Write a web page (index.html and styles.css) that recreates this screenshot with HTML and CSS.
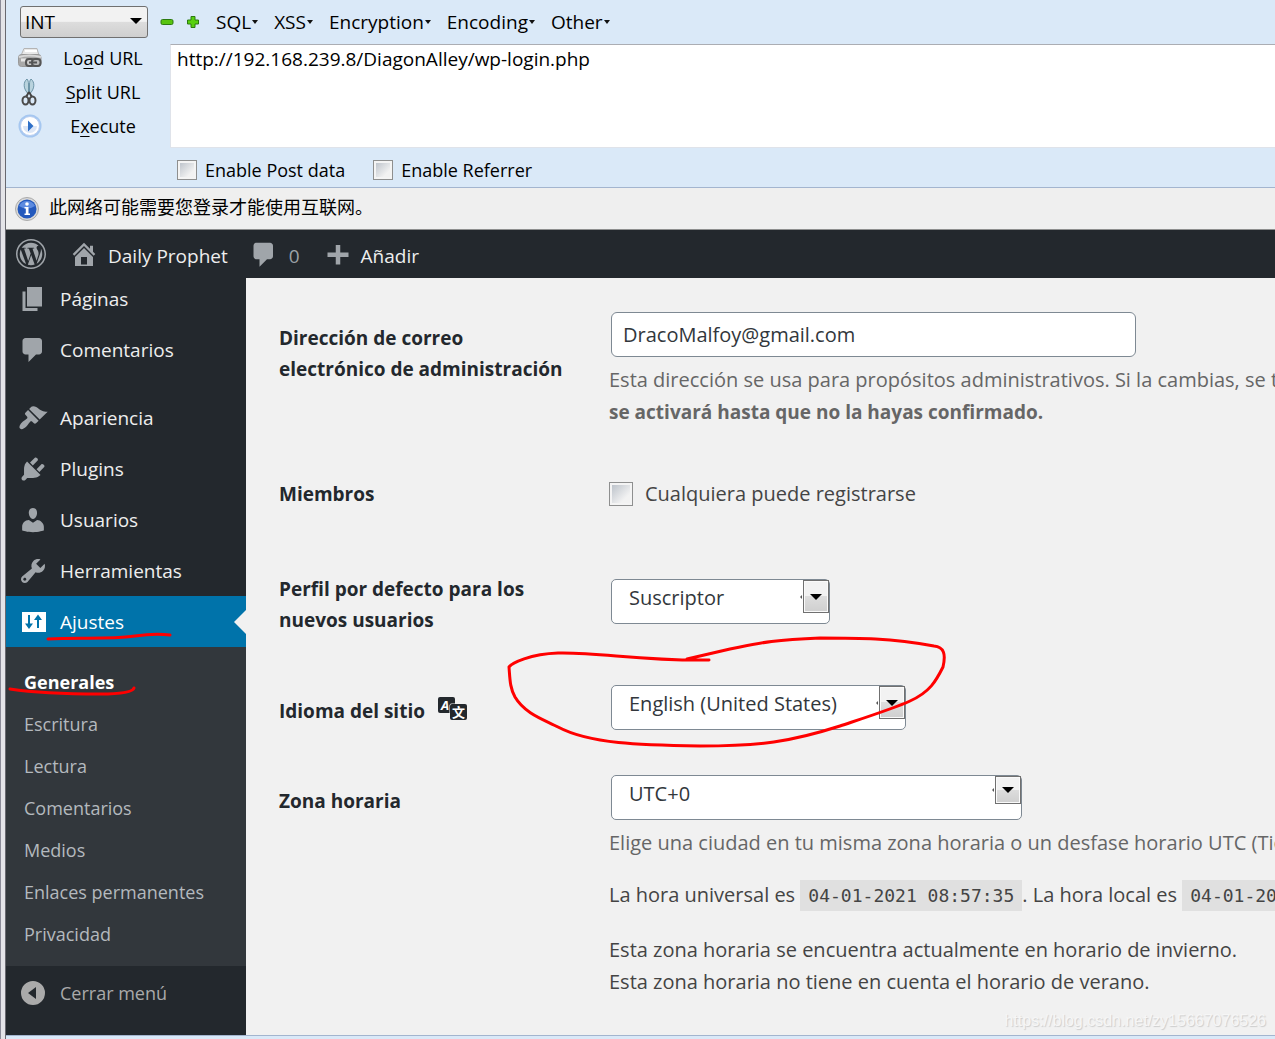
FILE: index.html
```html
<!DOCTYPE html>
<html lang="es">
<head>
<meta charset="utf-8">
<title>Ajustes generales - Daily Prophet</title>
<link rel="stylesheet" href="styles.css">
</head>
<body>
<div class="window">
  <header class="hackbar">
    <div class="hackbar-menu">
      <span class="native-select">
        <select aria-label="Tipo"><option>INT</option></select>
        <svg class="native-arrow" viewBox="0 0 12 6"><path d="M0 0h12L6 6z"/></svg>
      </span>
      <button class="sign" aria-label="Quitar"><svg width="14" height="14" viewBox="0 0 14 14"><rect x="1" y="4.500" width="12" height="5" rx="1.500" fill="#58c410" stroke="#2c7a10"/></svg></button>
      <button class="sign" aria-label="Agregar"><svg width="14" height="14" viewBox="0 0 14 14"><path d="M5 1.500h4V5h3.500v4H9v3.500H5V9H1.500V5H5z" fill="#58d010" stroke="#2c7a10" stroke-linejoin="round"/></svg></button>
      <nav class="menus">
        <button>SQL<i></i></button>
        <button>XSS<i></i></button>
        <button>Encryption<i></i></button>
        <button>Encoding<i></i></button>
        <button>Other<i></i></button>
      </nav>
    </div>
    <div class="hackbar-main">
      <div class="actions">
        <button><svg width="24" height="24" viewBox="0 0 24 24"><path d="M6 2.500h13l2 7H3z" fill="#e8e8e8" stroke="#b4b4b4"/><path d="M7 5h12" stroke="#fff" stroke-width="2"/><rect x=".5" y="8.500" width="22.500" height="12" rx="3" fill="#a9a9a9" stroke="#999"/><path d="M1 11q10-3 22 0" fill="none" stroke="#d8d8d8" stroke-width="2"/><path d="M3 14h5" stroke="#e6e6e6" stroke-width="3"/><rect x="8" y="13" width="8" height="7" rx="3" fill="#ccc" stroke="#555" stroke-width="2"/><rect x="14" y="13" width="8.500" height="7" rx="3" fill="#bbb" stroke="#555" stroke-width="2"/><path d="M11 16.500h8" stroke="#555" stroke-width="2"/></svg><span>Lo<u>a</u>d URL</span></button>
        <button><svg width="24" height="28" viewBox="0 0 24 28"><path d="M9 1C5 4 5 11 10.500 16V6C10.500 4 10 2 9 1zm4 0c4 3 4 10-1.500 15V6c0-2 .5-4 1.500-5z" fill="#b9d3de" stroke="#6d95a8"/><path d="M11 14l-3 5M11 14l3 5" stroke="#444" stroke-width="2"/><ellipse cx="7.500" cy="22.500" rx="3" ry="4" fill="none" stroke="#4b4b4b" stroke-width="2"/><ellipse cx="14.500" cy="22.500" rx="3" ry="4" fill="none" stroke="#4b4b4b" stroke-width="2"/></svg><span><u>S</u>plit URL</span></button>
        <button><svg width="24" height="24" viewBox="0 0 24 24"><circle cx="12" cy="12" r="11.500" fill="#8fb8ec" opacity=".7"/><circle cx="12" cy="12" r="9.500" fill="#fff" stroke="#b8cdf0"/><path d="M5 12a7 7 0 0 0 14 0z" fill="#dce6f6"/><path d="M10 6.500l5.500 5.500-5.500 5.500z" fill="#2f70c8"/></svg><span>E<u>x</u>ecute</span></button>
      </div>
      <textarea class="url" aria-label="URL" spellcheck="false">http://192.168.239.8/DiagonAlley/wp-login.php</textarea>
    </div>
    <div class="hackbar-options">
      <label><input type="checkbox" class="win-check">Enable Post data</label>
      <label><input type="checkbox" class="win-check">Enable Referrer</label>
    </div>
  </header>

  <div class="notice">
    <svg width="24" height="24" viewBox="0 0 24 24"><circle cx="12" cy="12" r="11.500" fill="#d9d9d9" stroke="#aaa"/><circle cx="12" cy="12" r="9.500" fill="#2459bd"/><path d="M4 9a9 9 0 0 1 16 0q-8 5-16 0z" fill="#5d8be0"/><circle cx="12" cy="7" r="1.800" fill="#fff"/><path d="M9.500 10h4v6.500h1.500V18H9.500v-1.500h1.300v-5H9.500z" fill="#fff"/></svg>
    <span>此网络可能需要您登录才能使用互联网。</span>
  </div>

  <div class="adminbar">
    <a href="#" class="wp-logo" aria-label="WordPress"><svg class="icon" viewBox="0 0 24 24"><path d="M12.158 12.786l-2.698 7.840c.806.236 1.657.365 2.540.365 1.047 0 2.051-.18 2.986-.51-.024-.037-.046-.078-.065-.123l-2.762-7.572zM3.009 12c0 3.559 2.068 6.634 5.067 8.092L3.788 8.341c-.502 1.118-.78 2.355-.78 3.659zm15.060-.454c0-1.112-.399-1.881-.741-2.480-.456-.741-.883-1.368-.883-2.109 0-.826.627-1.596 1.510-1.596.04 0 .078.005.116.007-1.598-1.464-3.730-2.360-6.070-2.360-3.141 0-5.904 1.613-7.512 4.052.211.007.41.01.579.01.94 0 2.396-.114 2.396-.114.484-.028.541.684.057.74 0 0-.487.057-1.029.086l3.274 9.739 1.968-5.901-1.401-3.838c-.485-.029-.943-.086-.943-.086-.484-.029-.428-.769.057-.74 0 0 1.484.114 2.368.114.94 0 2.397-.114 2.397-.114.486-.028.543.684.058.74 0 0-.488.057-1.030.086l3.249 9.665.897-2.996c.456-1.169.684-2.137.684-2.907zm1.820-3.860c.039.286.06.593.06.924 0 .912-.171 1.938-.684 3.220l-2.746 7.940c2.672-1.558 4.470-4.454 4.470-7.771 0-1.564-.399-3.033-1.100-4.313zM12 22.784C6.054 22.784 1.215 17.946 1.215 12S6.054 1.215 12 1.215 22.784 6.054 22.784 12 17.946 22.784 12 22.784zM12 0C5.373 0 0 5.373 0 12s5.373 12 12 12 12-5.373 12-12S18.627 0 12 0z"/></svg></a>
    <a href="#" class="site"><svg class="icon" viewBox="0 0 20 20"><path d="M16 8.500l1.530 1.530-1.060 1.060L10 4.600l-6.470 6.490-1.060-1.060L10 2.500l4 4v-2h2v4zm-6-2.460l6 5.990V18H4v-5.970zM12 17v-5H8v5h4z"/></svg><span>Daily Prophet</span></a>
    <a href="#" class="count"><svg class="icon" viewBox="0 0 20 19"><path d="M5 2h9c1.100 0 2 .9 2 2v7c0 1.100-.9 2-2 2h-2l-5 5v-5H5c-1.100 0-2-.9-2-2V4c0-1.100.9-2 2-2z"/></svg><span>0</span></a>
    <a href="#" class="add"><svg class="icon" viewBox="0 0 20 20"><path d="M17 9v3h-5.500v5h-3v-5H3V9h5.500V4h3v5z"/></svg><span>Añadir</span></a>
  </div>

  <div class="workspace">
    <nav class="sidebar">
      <ul class="menu">
        <li class="scrolled"><a href="#"><svg class="icon" viewBox="0 0 20 20"><path d="M6 15V2h10v13H6zm-1 1h8v2H3V5h2v11z"/></svg>Páginas</a></li>
        <li><a href="#"><svg class="icon" viewBox="0 0 20 20"><path d="M5 2h9c1.100 0 2 .9 2 2v7c0 1.100-.9 2-2 2h-2l-5 5v-5H5c-1.100 0-2-.9-2-2V4c0-1.100.9-2 2-2z"/></svg>Comentarios</a></li>
        <li class="group"><a href="#"><svg class="icon" viewBox="0 0 20 20"><path d="M14.480 11.060L7.410 3.990l1.500-1.500c.5-.56 2.300-.47 3.510.32 1.210.8 1.430 1.280 2.910 2.100 1.180.64 2.450 1.260 4.450.85zm-.71.71L6.700 4.700 4.930 6.470c-.39.39-.39 1.020 0 1.410l1.060 1.060c.39.39.39 1.030 0 1.420-.6.6-1.430 1.110-2.210 1.690-.35.26-.7.53-1.010.84C1.430 14.230.4 16.080 1.400 17.070c.99 1 2.840-.03 4.180-1.360.31-.31.58-.66.85-1.020.57-.78 1.080-1.610 1.690-2.210.39-.39 1.020-.39 1.410 0l1.060 1.060c.39.39 1.020.39 1.410 0z"/></svg>Apariencia</a></li>
        <li><a href="#"><svg class="icon" viewBox="0 0 20 20"><path d="M13.110 4.360L9.870 7.600 8 5.730l3.240-3.240c.35-.34 1.050-.2 1.560.32.52.51.66 1.210.31 1.550zm-8 1.770l.91-1.120 9.010 9.010-1.190.84c-.71.71-2.630 1.160-3.820 1.160H6.140L4.900 17.260c-.59.59-1.540.59-2.120 0-.59-.58-.59-1.530 0-2.120l1.240-1.240v-3.880c0-1.130.4-3.190 1.090-3.890zm7.260 3.970l3.240-3.240c.34-.35 1.040-.21 1.550.31.52.51.66 1.210.31 1.550l-3.240 3.250z"/></svg>Plugins</a></li>
        <li><a href="#"><svg class="icon" viewBox="0 0 20 20"><path d="M10 9.250c-2.270 0-2.730-3.440-2.730-3.440C7 4.020 7.820 2 9.970 2c2.160 0 2.980 2.020 2.710 3.810 0 0-.41 3.440-2.680 3.440zm0 2.570L12.720 10c2.390 0 4.520 2.330 4.520 4.530v2.490s-3.650 1.130-7.240 1.130c-3.650 0-7.240-1.130-7.240-1.130v-2.490c0-2.250 1.940-4.480 4.470-4.480z"/></svg>Usuarios</a></li>
        <li><a href="#"><svg class="icon" viewBox="0 0 20 20"><path d="M16.680 9.770c-1.340 1.340-3.300 1.670-4.950.99l-5.410 6.520c-.99.99-2.590.99-3.580 0s-.99-2.590 0-3.570l6.520-5.420c-.68-1.650-.35-3.610.99-4.950 1.280-1.280 3.120-1.620 4.720-1.060l-2.890 2.890 2.820 2.820 2.860-2.870c.53 1.580.18 3.390-1.080 4.650zM3.810 16.210c.4.39 1.040.39 1.430 0 .4-.4.4-1.040 0-1.430-.39-.4-1.030-.4-1.430 0-.39.39-.39 1.030 0 1.430z"/></svg>Herramientas</a></li>
        <li class="current"><a href="#"><svg class="icon" viewBox="0 0 30 30"><path d="M4 5h24v20H4z"/><path d="M11 8v12M20 21V9" fill="none" stroke="#0073aa" stroke-width="2"/><path d="M7 16.500h8L11 22zM16 13h8l-4-5.500z" fill="#0073aa"/></svg>Ajustes</a>
          <ul class="submenu">
            <li class="active"><a href="#">Generales</a></li>
            <li><a href="#">Escritura</a></li>
            <li><a href="#">Lectura</a></li>
            <li><a href="#">Comentarios</a></li>
            <li><a href="#">Medios</a></li>
            <li><a href="#">Enlaces permanentes</a></li>
            <li><a href="#">Privacidad</a></li>
          </ul>
        </li>
      </ul>
      <button class="collapse"><svg class="icon" viewBox="0 0 30 30"><path fill-rule="evenodd" d="M15 3a12 12 0 1 0 0 24 12 12 0 0 0 0-24zm3 6v12l-8-6z"/></svg>Cerrar menú</button>
    </nav>

    <main class="content">
      <form class="settings">
        <div class="row">
          <label class="name" for="email">Dirección de correo electrónico de administración</label>
          <div class="field">
            <input id="email" class="text" type="email" value="DracoMalfoy@gmail.com">
            <p class="description">Esta dirección se usa para propósitos administrativos. Si la cambias, se te<br><strong>se activará hasta que no la hayas confirmado.</strong></p>
          </div>
        </div>
        <div class="row row-check">
          <span class="name">Miembros</span>
          <div class="field">
            <label class="check"><input type="checkbox" class="win-check large">Cualquiera puede registrarse</label>
          </div>
        </div>
        <div class="row row-role">
          <label class="name" for="role">Perfil por defecto para los nuevos usuarios</label>
          <div class="field">
            <span class="wp-select role"><select id="role"><option>Suscriptor</option></select><span class="drop"><svg viewBox="0 0 12 6"><path d="M0 0h12L6 6z"/></svg></span></span>
          </div>
        </div>
        <div class="row row-lang">
          <label class="name" for="lang">Idioma del sitio <svg class="translate" width="29" height="24" viewBox="0 0 29 24" aria-hidden="true"><rect width="17" height="16" rx="2" fill="#23282d"/><rect x="11.500" y="6.500" width="18" height="18" rx="2" fill="#f1f1f1"/><rect x="12" y="7" width="17" height="16" rx="2" fill="#23282d"/><text x="3" y="13" class="glyph-a">A</text><text x="14" y="20" class="glyph-wen">文</text></svg></label>
          <div class="field">
            <span class="wp-select lang"><select id="lang"><option>English (United States)</option></select><span class="drop"><svg viewBox="0 0 12 6"><path d="M0 0h12L6 6z"/></svg></span></span>
          </div>
        </div>
        <div class="row row-zone">
          <label class="name" for="zone">Zona horaria</label>
          <div class="field">
            <span class="wp-select zone"><select id="zone"><option>UTC+0</option></select><span class="drop short"><svg viewBox="0 0 12 6"><path d="M0 0h12L6 6z"/></svg></span></span>
            <p class="description">Elige una ciudad en tu misma zona horaria o un desfase horario UTC (Tie</p>
            <p class="info">La hora universal es <code>04-01-2021 08:57:35</code>. La hora local es <code>04-01-20</code></p>
            <p class="info">Esta zona horaria se encuentra actualmente en horario de invierno.<br>Esta zona horaria no tiene en cuenta el horario de verano.</p>
          </div>
        </div>
      </form>
    </main>
  </div>
  <footer class="statusbar"></footer>
</div>
<svg class="marks" width="960" height="760" viewBox="0 0 960 760" aria-hidden="true">
  <path d="M48 639C80 637 105 640 135 636Q155 633 170 635"/>
  <path d="M10 689C30 692 70 694 100 694Q132 694 134 688"/>
  <path d="M709 660C640 661 600 652 558 653C530 654 512 663 509 667C510 680 510 688 515 697C525 714 545 720 558 727C590 744 640 745 700 746C760 746 790 742 840 726C870 716 895 708 910 701C930 692 936 681 943 667C946 654 944 647 934 646C890 638 860 638 820 638C770 640 760 643 730 649L687 659"/>
</svg>
<span class="watermark">https://blog.csdn.net/zy15667076526</span>
</body>
</html>
```

FILE: styles.css
```css
* { box-sizing: border-box; }
body {
  margin: 0;
  position: relative;
  font-family: "Open Sans", "Noto Sans CJK SC", sans-serif;
  font-size: 19px;
  color: #000;
  overflow-x: hidden;
}
button, select, input, textarea { font: inherit; color: inherit; }
button { background: none; border: 0; padding: 0; }
a { color: inherit; text-decoration: none; }
ul { list-style: none; margin: 0; padding: 0; }
p { margin: 0; }

.window {
  display: flex;
  flex-direction: column;
  min-height: 100vh;
  padding-left: 6px;
  background: linear-gradient(to right, #8b8b98 0 1px, #e4e4e8 1px 5px, #696970 5px 6px, #dae9f8 6px);
}

/* HackBar toolbar */
.hackbar { background: #dae9f8; border-bottom: 1px solid #a3b5cf; }
.hackbar-menu { display: flex; align-items: center; height: 44px; padding-left: 14px; }
.native-select { position: relative; width: 128px; margin-right: 12px; }
.native-select select {
  appearance: none;
  display: block;
  width: 100%;
  height: 32px;
  padding: 0 4px;
  border: 1px solid #707070;
  border-radius: 3px;
  background: linear-gradient(#f2f2f2 0 48%, #dddddd 50%, #cfcfcf);
}
.native-arrow { position: absolute; right: 6px; top: 12px; width: 12px; height: 6px; }
.sign { display: flex; width: 26px; }
.menus { display: flex; gap: 16px; margin-left: 4px; }
.menus button { display: flex; align-items: center; gap: 1px; }
.menus i { border: 3px solid transparent; border-top: 4px solid #111; border-bottom: 0; }
.hackbar-main { display: flex; }
.actions { display: flex; flex-direction: column; flex: 0 0 164px; padding-left: 12px; font-size: 18px; }
.actions button { display: flex; align-items: center; height: 34px; padding-bottom: 6px; line-height: 28px; }
.actions svg { flex: none; }
.actions span { flex: 1; text-align: center; padding-right: 6px; }
.actions u { text-underline-offset: 3px; text-decoration-thickness: 1px; }
.url {
  flex: 1;
  height: 104px;
  padding: 0 6px;
  border: 1px solid #dfe3ea;
  border-top-color: #abadb3;
  border-right: 0;
  line-height: 28px;
  background: #fff;
  resize: none;
  outline: 0;
}
.hackbar-options { display: flex; gap: 24px; height: 39px; padding: 5px 0 0 171px; font-size: 18px; }
.hackbar-options label { display: flex; align-items: center; gap: 8px; }
.hackbar-options label + label { padding-left: 4px; }
.win-check {
  appearance: none;
  width: 20px;
  height: 20px;
  margin: 0;
  border: 1px solid #8e8f8f;
  outline: 2px solid #f4f4f4;
  outline-offset: -3px;
  background: linear-gradient(135deg, #b5bcc5, #f2f2f2 70%);
}
.win-check.large { width: 24px; height: 24px; }

/* Browser notification strip */
.notice {
  display: flex;
  align-items: center;
  gap: 10px;
  height: 42px;
  padding-left: 9px;
  background: #efefef;
  border-bottom: 1px solid #8e8f8f;
  font-size: 18px;
}
.notice span { padding-bottom: 6px; }

/* WordPress */
.icon { width: 30px; height: 30px; flex: none; fill: #a0a5aa; }
.adminbar {
  display: flex;
  align-items: center;
  height: 48px;
  padding-left: 10px;
  background: #23282d;
  color: #eee;
  position: relative;
  z-index: 1;
}
.adminbar a { display: flex; align-items: center; }
.adminbar span { padding-top: 4px; }
.site { gap: 9px; margin-left: 23px; }
.count { gap: 10px; margin-left: 21px; color: #9ca2a7; }
.add { gap: 8px; margin-left: 23px; }

.workspace { display: flex; flex: 1; background: #f1f1f1; }
.sidebar { flex: 0 0 240px; background: #23282d; color: #eee; }
.menu > li > a, .collapse { display: flex; align-items: center; gap: 12px; height: 51px; padding-left: 12px; }
.menu .scrolled { margin-top: -5px; }
.menu .group { margin-top: 17px; }
.menu .current > a { background: #0073aa; color: #fff; position: relative; }
.current > a .icon { fill: #fff; }
.current > a::after {
  content: "";
  position: absolute;
  right: 0;
  top: 14px;
  border: 12px solid transparent;
  border-right-color: #f1f1f1;
  border-left: 0;
}
.submenu { padding: 14px 0 11px; background: #32373c; color: #b4b9be; font-size: 18px; }
.submenu a { display: block; padding-left: 18px; line-height: 42px; }
.submenu .active { color: #fff; font-weight: 700; }
.collapse { margin-top: 1px; color: #aaa; font-size: 18px; }
.collapse .icon { fill: #aaa; }

.content { flex: 1; min-width: 0; overflow: hidden; padding: 34px 0 0 33px; color: #444; }
.row { display: grid; grid-template-columns: 330px 1fr; padding-bottom: 40px; }
.row-check { padding-bottom: 53px; }
.row-role { padding-bottom: 49px; }
.row-lang { padding-bottom: 45px; }
.row-zone { padding-bottom: 0; }
.name, .description strong { font-size: 19px; font-weight: 700; }
.name { padding: 11px 38px 0 0; color: #23282d; line-height: 31px; }
.field { min-width: 0; white-space: nowrap; font-size: 20px; line-height: 32px; }
.row-check .field { padding-top: 10px; }
.row-role .field { padding-top: 16px; }
.text {
  display: block;
  width: 525px;
  height: 45px;
  margin: 0 0 7px 2px;
  padding: 0 11px;
  border: 1px solid #7e8993;
  border-radius: 6px;
  background: #fff;
  color: #32373c;
}
.description { color: #666; }
.check { display: flex; align-items: center; gap: 12px; }
.wp-select { position: relative; display: block; margin-left: 2px; }
.wp-select select {
  appearance: none;
  display: block;
  width: 100%;
  height: 45px;
  padding: 0 17px 8px;
  border: 1px solid #7e8993;
  border-radius: 5px;
  background: #fff;
  color: #32373c;
}
.role { width: 219px; }
.lang { width: 295px; }
.zone { width: 411px; margin-bottom: 7px; }
.drop {
  position: absolute;
  top: 1px;
  right: 1px;
  display: flex;
  justify-content: center;
  align-items: center;
  width: 26px;
  height: 33px;
  border: 1px solid #707070;
  box-shadow: inset 0 0 0 1px #fafafa;
  background: linear-gradient(#f2f2f2 0 48%, #dddddd 50%, #cfcfcf);
  pointer-events: none;
}
.drop::before { content: ""; position: absolute; left: -4px; border: 2px solid transparent; border-right-color: #555; border-left: 0; }
.drop.short { height: 28px; }
.drop svg { width: 12px; height: 6px; }
.info { margin-top: 20px; }
.info + .info { margin-top: 22px; }
code { padding: 5px 8px; background: #e0e0e0; font-family: "DejaVu Sans Mono", monospace; font-size: 18px; }
.translate { margin-left: 8px; vertical-align: -3px; }
.glyph-a { font: italic 700 13px "Open Sans", sans-serif; fill: #fff; }
.glyph-wen { font: 700 13px "Noto Sans CJK SC", sans-serif; fill: #fff; }

.statusbar { height: 4px; border-top: 1px solid #a3b5cf; background: #dae9f8; }

/* Pen marks drawn over the page */
.marks { position: absolute; left: 0; top: 0; z-index: 2; pointer-events: none; fill: none; stroke: #f00; stroke-width: 3; stroke-linecap: round; stroke-linejoin: round; }
.watermark { position: absolute; right: 9px; bottom: 8px; z-index: 2; font: 16px/20px "Liberation Sans", sans-serif; color: #f6f6f6; text-shadow: 1px 1px 1px #ccc; }
```
